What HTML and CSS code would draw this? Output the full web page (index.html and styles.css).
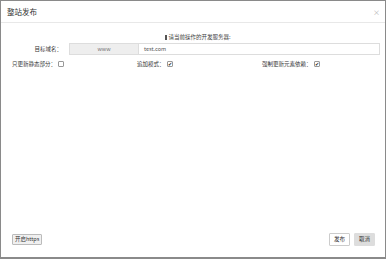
FILE: index.html
```html
<!DOCTYPE html>
<html lang="zh">
<head>
  <meta charset="UTF-8" />
  <title>整站发布</title>
  <link rel="stylesheet" href="styles.css">
</head>
<body>
  <div class="modal">
    <div class="modal-header">
      <span class="title">整站发布</span>
      <span class="close">×</span>
    </div>
    <div class="modal-body">
      <div class="tip"><span class="bar"></span>请当前操作的开发服务器:</div>
      <div class="form-row">
        <label class="label">目标域名：</label>
        <div class="input-group">
          <span class="addon">www</span>
          <span class="input">test.com</span>
        </div>
      </div>
      <div class="check-row">
        <div class="check-item">只更新静态部分：<span class="box"></span></div>
        <div class="check-item">追加模式：<span class="box checked">✔</span></div>
        <div class="check-item">强制更新元素依赖：<span class="box checked">✔</span></div>
      </div>
    </div>
    <div class="modal-footer">
      <button class="btn">开启https</button>
      <div class="actions">
        <button class="btn btn-white">发布</button>
        <button class="btn btn-gray">取消</button>
      </div>
    </div>
  </div>
</body>
</html>
```

FILE: styles.css
```css
html, body {
  margin: 0;
  padding: 0;
}
body {
  background: #8a8a8a;
  font-family: "Noto Sans CJK SC", "Liberation Sans", sans-serif;
  color: #333;
  font-size: 5.5px;
  width: 386px;
  height: 259px;
  overflow: hidden;
}
.modal {
  margin: 1px 1px 0 1px;
  height: 256px;
  background: #fff;
  display: flex;
  flex-direction: column;
}
.modal-header {
  height: 21px;
  border-bottom: 1px solid #e8e8e8;
  display: flex;
  align-items: center;
  justify-content: space-between;
  padding: 0 5px 0 6px;
}
.title {
  font-size: 7.5px;
  color: #333;
}
.close {
  font-size: 7px;
  color: #b0b0b0;
}
.modal-body {
  flex: 1;
  padding: 9px 5px 0 11px;
}
.tip {
  text-align: center;
  color: #444;
  height: 10px;
  line-height: 10px;
  padding-left: 4px;
}
.bar {
  display: inline-block;
  width: 2px;
  height: 5px;
  background: #555;
  margin-right: 1px;
  vertical-align: -1px;
}
.form-row {
  display: flex;
  align-items: center;
  margin-top: 1px;
}
.label {
  width: 50px;
  text-align: right;
  padding-right: 7px;
  color: #333;
}
.input-group {
  flex: 1;
  display: flex;
  height: 12px;
}
.addon {
  width: 68px;
  background: #eee;
  border: 1px solid #ddd;
  color: #777;
  text-align: center;
  line-height: 10px;
}
.input {
  flex: 1;
  border: 1px solid #ddd;
  border-left: none;
  padding-left: 5px;
  line-height: 10px;
  color: #555;
}
.check-row {
  display: grid;
  grid-template-columns: 125px 125px 1fr;
  margin-top: 4px;
  height: 10px;
  align-items: center;
}
.check-item {
  display: flex;
  align-items: center;
}
.box {
  width: 4px;
  height: 4px;
  border: 1px solid #999;
  border-radius: 1px;
  margin-left: 2px;
  font-size: 5px;
  line-height: 4px;
  text-align: center;
  color: #222;
  overflow: hidden;
}
.modal-footer {
  display: flex;
  justify-content: space-between;
  align-items: flex-end;
  padding: 0 10px 11px 11px;
}
.btn {
  font-family: inherit;
  font-size: 5.5px;
  color: #333;
  background: #f0f0f0;
  border: 1px solid #bbb;
  border-radius: 1px;
  padding: 0 2px;
  height: 11px;
  line-height: 9px;
  margin: 0 0 1px 0;
}
.actions {
  display: flex;
  gap: 4px;
}
.actions .btn {
  width: 21px;
  height: 13px;
  padding: 0;
  margin: 0;
}
.btn-white {
  background: #fff;
  border-color: #ccc;
}
.btn-gray {
  background: #ddd;
  border-color: #ddd;
}
```
